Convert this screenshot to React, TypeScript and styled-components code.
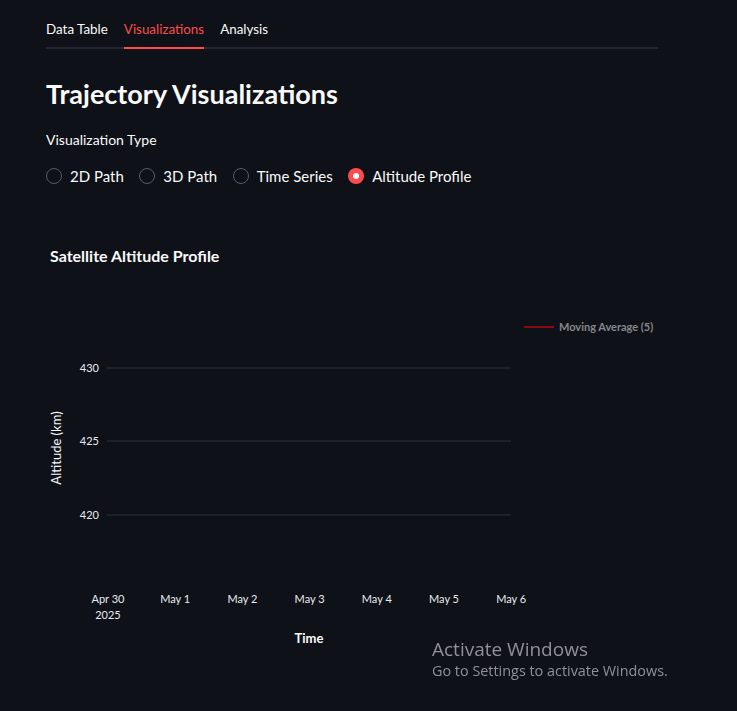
import React, { useState } from "react";
import styled, { createGlobalStyle } from "styled-components";

const GlobalStyle = createGlobalStyle`
  html, body {
    margin: 0;
    padding: 0;
    background: #0e1117;
    color: #fafafa;
    font-family: Lato, "Noto Sans", sans-serif;
  }
`;

const Page = styled.div`
  min-height: 711px;
  padding: 0 79px 0 46px;
  box-sizing: border-box;
  background: #0e1117;
`;

const TabBar = styled.div`
  display: flex;
  gap: 16px;
  border-bottom: 2px solid #262730;
  height: 47px;
  box-sizing: content-box;
`;

const Tab = styled.div<{ active?: boolean }>`
  display: flex;
  align-items: flex-end;
  box-sizing: border-box;
  padding-bottom: 12px;
  font-size: 13.4px;
  color: ${(p) => (p.active ? "#ff4b4b" : "#fafafa")};
  box-shadow: ${(p) => (p.active ? "inset 0 -2px 0 #ff4b4b" : "none")};
  margin-bottom: -2px;
  height: calc(100% + 2px);
  cursor: pointer;
`;

const Title = styled.h2`
  margin: 28px 0 0;
  font-size: 27px;
  font-weight: 700;
  line-height: 34px;
`;

const Label = styled.div`
  margin-top: 19px;
  font-size: 14px;
  line-height: 20px;
`;

const RadioGroup = styled.div`
  display: flex;
  gap: 15.5px;
  margin-top: 17px;
`;

const RadioItem = styled.label`
  display: flex;
  align-items: center;
  gap: 8px;
  font-size: 15px;
  line-height: 18px;
  cursor: pointer;
`;

const Circle = styled.span<{ checked?: boolean }>`
  width: 16px;
  height: 16px;
  border-radius: 50%;
  box-sizing: border-box;
  border: ${(p) => (p.checked ? "none" : "1px solid #585b63")};
  background: ${(p) => (p.checked ? "#ff4b4b" : "transparent")};
  display: flex;
  align-items: center;
  justify-content: center;
  &::after {
    content: "";
    width: 6px;
    height: 6px;
    border-radius: 50%;
    background: #fff;
    display: ${(p) => (p.checked ? "block" : "none")};
  }
`;

const ChartBox = styled.div`
  margin-top: 46px;
  width: 612px;
  height: 440px;
  svg {
    display: block;
    font-family: Lato, "Noto Sans", sans-serif;
  }
`;

const Watermark = styled.div`
  position: fixed;
  left: 432px;
  top: 637px;
  color: #8f9196;
  font-family: "Open Sans", "Noto Sans", sans-serif;
  line-height: 1.3;
  pointer-events: none;
`;

const WmTitle = styled.div`
  font-size: 19px;
`;

const WmSub = styled.div`
  font-size: 14.4px;
`;

const tabs = ["Data Table", "Visualizations", "Analysis"];
const types = ["2D Path", "3D Path", "Time Series", "Altitude Profile"];
const yTicks = [
  { v: "430", y: 137 },
  { v: "425", y: 210 },
  { v: "420", y: 284 },
];
const xTicks = ["Apr 30", "May 1", "May 2", "May 3", "May 4", "May 5", "May 6"];

const Chart = () => (
  <svg width={612} height={440} viewBox="0 0 612 440">
    <text x={4} y={31} fill="#fafafa" fontSize={16} fontWeight={700}>
      Satellite Altitude Profile
    </text>
    <line x1={478} x2={508} y1={96} y2={96} stroke="#8b0a0f" strokeWidth={2} />
    <text x={513} y={100} fill="#85878c" fontSize={11} fontWeight={700}>
      Moving Average (5)
    </text>
    {yTicks.map((t) => (
      <g key={t.v}>
        <line x1={61} x2={465} y1={t.y} y2={t.y} stroke="#31333b" strokeWidth={1} />
        <text x={53} y={t.y + 4} fill="#e8ecf2" fontSize={11} textAnchor="end">
          {t.v}
        </text>
      </g>
    ))}
    <text
      transform="translate(15 217) rotate(-90)"
      fill="#fafafa"
      fontSize={13}
      textAnchor="middle"
    >
      Altitude (km)
    </text>
    {xTicks.map((t, i) => (
      <text key={t} x={62 + i * 67.2} y={372} fill="#e8ecf2" fontSize={11} textAnchor="middle">
        {t}
      </text>
    ))}
    <text x={62} y={388} fill="#e8ecf2" fontSize={11} textAnchor="middle">
      2025
    </text>
    <text x={263} y={412} fill="#fafafa" fontSize={13} fontWeight={700} textAnchor="middle">
      Time
    </text>
  </svg>
);

export default function App() {
  const [tab, setTab] = useState(1);
  const [kind, setKind] = useState(3);
  return (
    <Page>
      <GlobalStyle />
      <TabBar>
        {tabs.map((t, i) => (
          <Tab key={t} active={i === tab} onClick={() => setTab(i)}>
            {t}
          </Tab>
        ))}
      </TabBar>
      <Title>Trajectory Visualizations</Title>
      <Label>Visualization Type</Label>
      <RadioGroup>
        {types.map((t, i) => (
          <RadioItem key={t} onClick={() => setKind(i)}>
            <Circle checked={i === kind} />
            {t}
          </RadioItem>
        ))}
      </RadioGroup>
      <ChartBox>
        <Chart />
      </ChartBox>
      <Watermark>
        <WmTitle>Activate Windows</WmTitle>
        <WmSub>Go to Settings to activate Windows.</WmSub>
      </Watermark>
    </Page>
  );
}
